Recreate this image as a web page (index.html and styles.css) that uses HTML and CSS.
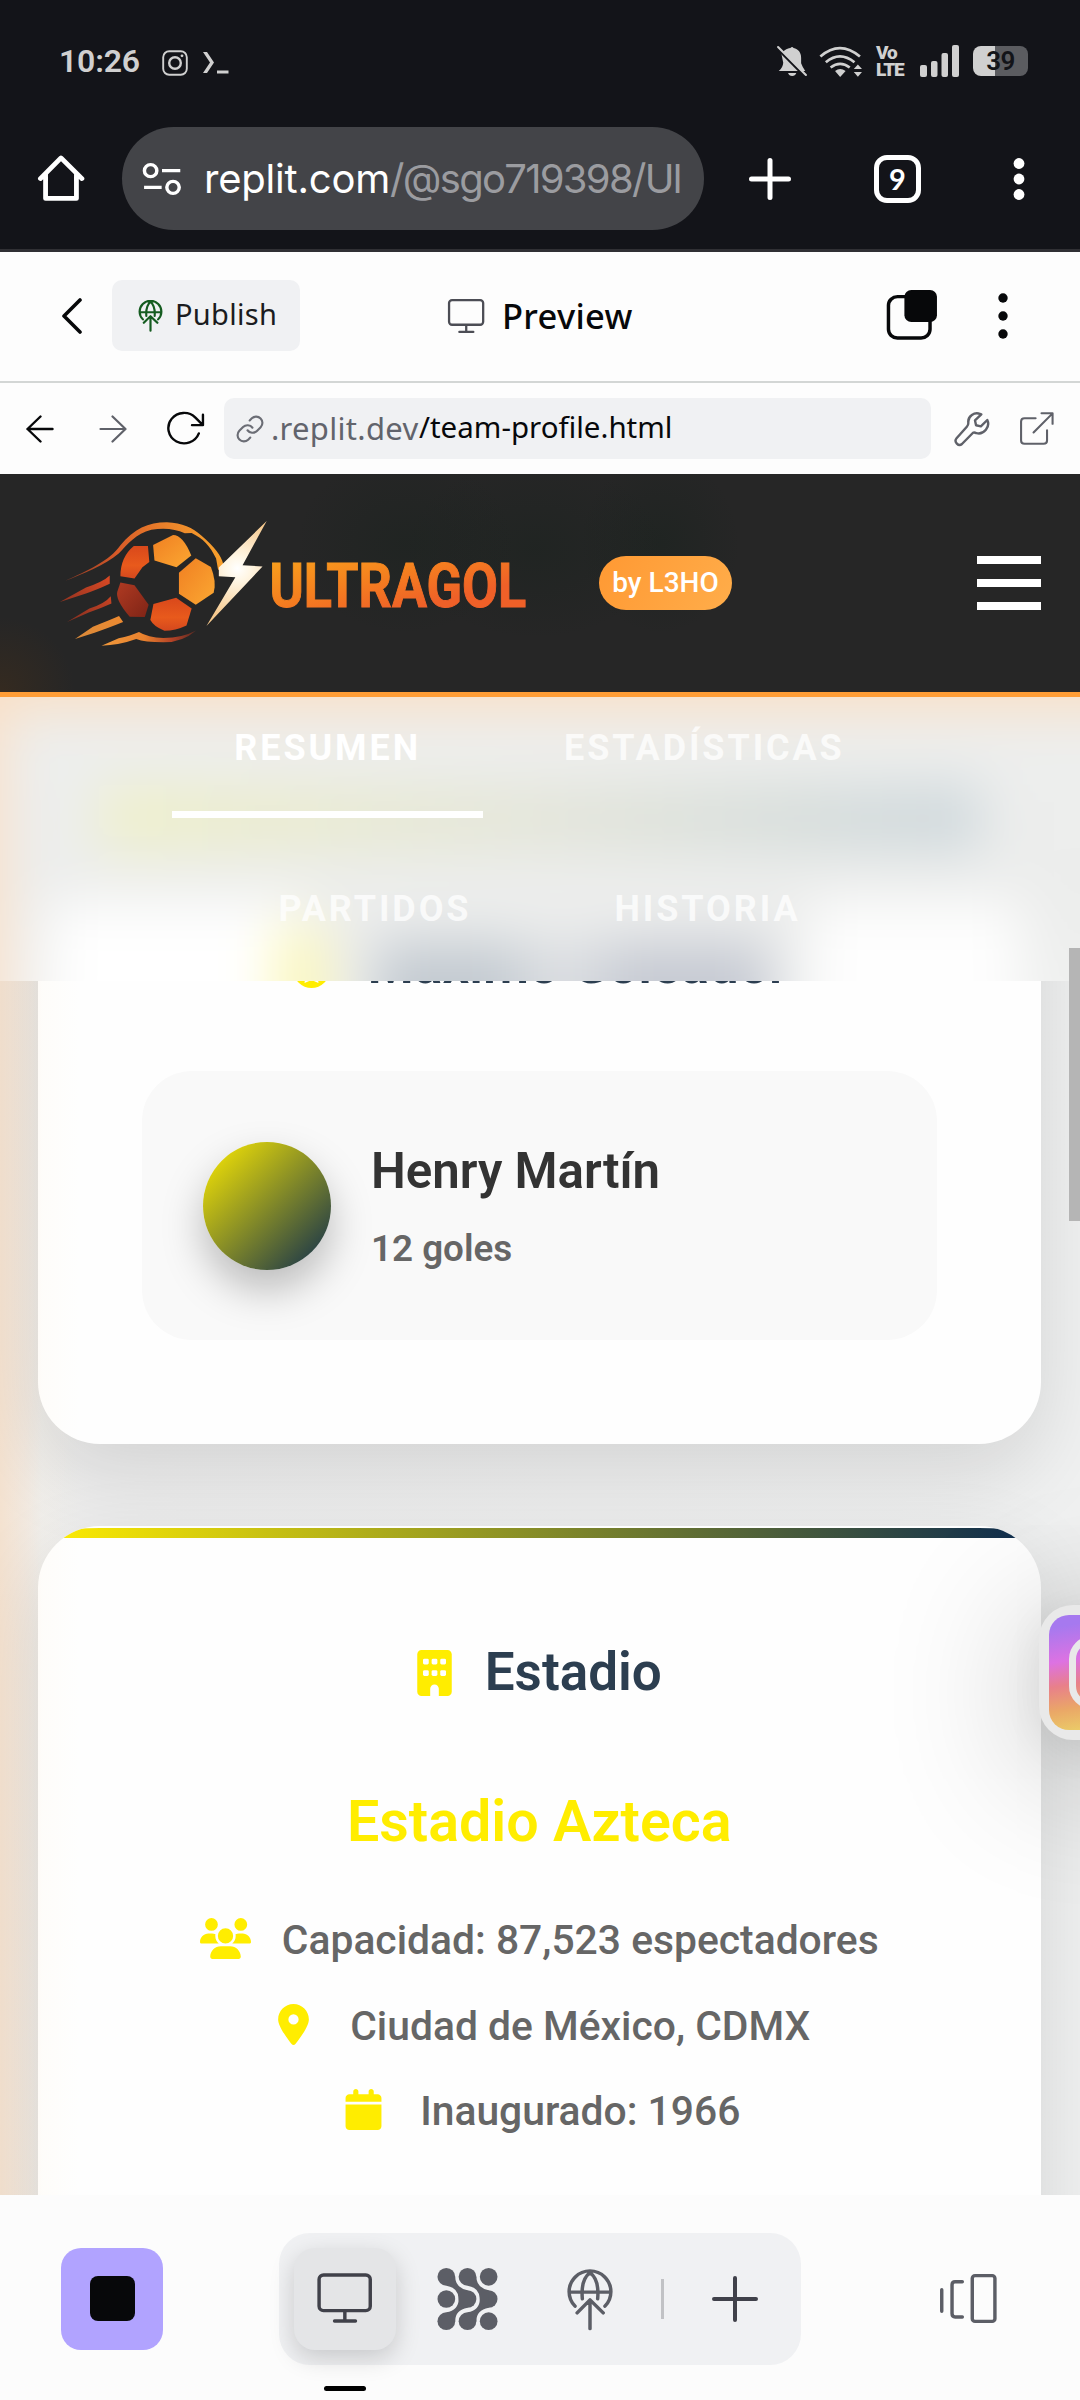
FILE: index.html
```html
<!DOCTYPE html>
<html lang="es">
<head>
<meta charset="utf-8">
<title>Preview</title>
<link rel="stylesheet" href="styles.css">
</head>
<body>
<div class="screen">

<div class="status">
  <span class="clock">10:26</span>
  <svg class="st-insta" viewBox="0 0 26 26" fill="none" stroke="#d0d0d0"><rect x="1.2" y="1.2" width="23.6" height="23.6" rx="6" stroke-width="1.9"/><circle cx="13" cy="13" r="5.8" stroke-width="2.4"/><circle cx="20" cy="5.8" r="1.4" fill="#d0d0d0" stroke="none"/></svg>
  <svg class="st-prompt" viewBox="0 0 26 22"><path d="M0 0h4l7 10.500-7 10.500H0l7-10.500z M14 18.500h11.500v3H14z" fill="#d0d0d0"/></svg>
  <span class="grow"></span>
  <svg class="st-bell" viewBox="684 135 93 96" preserveAspectRatio="none" fill="#d0d0d0"><path d="M700 163c6-12 14-17 26-19q5-6 9 0c14 3 22 14 22 29v17q4 12 12 23H692q12-10 13-25zM719 219h24q-3 9-12 9t-12-9z"/><path d="M686 143L768 229" stroke="#131419" stroke-width="8"/><path d="M690 141L771 225" stroke="#d0d0d0" stroke-width="6" stroke-linecap="round"/></svg>
  <svg class="st-wifi" viewBox="806 135 132 98" preserveAspectRatio="none" fill="none" stroke="#d0d0d0" stroke-width="8"><path d="M813 169q57-50 116 0M829 186q41-35 84 0M843 202q28-22 56 0"/><path d="M856 212q15-11 31 0l-16 18zM911 206l12-13 12 13zM911 215l12 14 12-14z" fill="#d0d0d0" stroke="none"/></svg>
  <span class="volte"><b>Vo</b><b>LTE</b></span>
  <svg class="st-signal" viewBox="0 0 39 32" fill="#d0d0d0"><rect y="20" width="7" height="12" rx="2"/><rect x="11" y="16" width="6.500" height="16" rx="2"/><rect x="21.500" y="8" width="6.500" height="24" rx="2"/><rect x="32" width="7" height="32" rx="2"/></svg>
  <span class="battery">39</span>
</div>

<div class="browser">
  <svg class="b-home" viewBox="108 462 140 146" preserveAspectRatio="none" fill="none" stroke="#fff" stroke-width="14" stroke-linecap="round" stroke-linejoin="round"><path d="M118 537L178 474L239 537M133 524V597H223V524"/></svg>
  <div class="omnibox">
    <svg class="b-tune" viewBox="414 484 116 102" preserveAspectRatio="none" fill="none" stroke="#fff" stroke-width="10"><circle cx="439" cy="510" r="18"/><path d="M472 510h53M420 560h51"/><circle cx="504" cy="560" r="18"/></svg>
    <span class="url">replit.com<i>/@sgo719398/Ul</i></span>
  </div>
  <svg class="b-plus" viewBox="0 0 42 42" stroke="#fff" stroke-width="5" stroke-linecap="round"><path d="M21 2.500v37M2.500 21h37"/></svg>
  <span class="tabs-count">9</span>
  <svg class="b-dots" viewBox="0 0 12 42" fill="#fff"><circle cx="6" cy="5.500" r="5.400"/><circle cx="6" cy="21" r="5.400"/><circle cx="6" cy="36.500" r="5.400"/></svg>
</div>

<div class="tool">
  <svg class="t-back" viewBox="0 0 20 36" fill="none" stroke="#07080a" stroke-width="3.600" stroke-linecap="round" stroke-linejoin="round"><path d="M18 2L2 18L18 34"/></svg>
  <div class="publish">
    <svg class="t-pub" viewBox="75 260 138 188" preserveAspectRatio="none" fill="none" stroke="#155c20" stroke-width="12" stroke-linecap="round" stroke-linejoin="round"><path d="M102 374A60 64 0 1 1 186 374M84 332H204M121 354Q117 295 144 270Q171 295 167 354M144 441V355M107 394L144 355L182 394"/></svg>
    <span>Publish</span>
  </div>
  <svg class="t-mon" viewBox="917 278 166 156" preserveAspectRatio="none" fill="none" stroke="#4c4d55" stroke-width="10" stroke-linecap="round"><rect x="926" y="287" width="149" height="107" rx="13"/><path d="M1001 396v28M971 425h61"/></svg>
  <b class="title">Preview</b>
  <svg class="t-tabs" viewBox="1005 147 153 156" preserveAspectRatio="none"><rect x="1015" y="170" width="120" height="124" rx="26" fill="none" stroke="#07080a" stroke-width="10"/><rect x="1061" y="150" width="94" height="96" rx="20" fill="#07080a"/></svg>
  <svg class="t-dots" viewBox="0 0 10 48" fill="#07080a"><circle cx="5" cy="6" r="4.700"/><circle cx="5" cy="24" r="4.700"/><circle cx="5" cy="42" r="4.700"/></svg>
</div>

<div class="addr">
  <svg class="a-back" viewBox="0 0 28 28" fill="none" stroke="#07080a" stroke-width="2.400" stroke-linecap="round" stroke-linejoin="round"><path d="M14.500 1.500L1.500 14L14.500 26.500M1.500 14H26.500"/></svg>
  <svg class="a-fwd" viewBox="0 0 28 28" fill="none" stroke="#5f6169" stroke-width="2.200" stroke-linecap="round" stroke-linejoin="round"><path d="M13.500 1.500L26.500 14L13.500 26.500M26.500 14H1.500"/></svg>
  <svg class="a-reload" viewBox="480 512 114 106" preserveAspectRatio="none" fill="none" stroke="#07080a" stroke-width="7" stroke-linecap="round" stroke-linejoin="round"><path d="M576 580A46 46 0 1 1 566 532L587 554M588 523V555H556"/></svg>
  <div class="field">
    <svg class="a-link" viewBox="0 0 24 24" fill="none" stroke="#6b6d75" stroke-width="1.700" stroke-linecap="round" stroke-linejoin="round"><path d="M10 13a5 5 0 0 0 7.540.540l3-3a5 5 0 0 0-7.070-7.070l-1.720 1.710"/><path d="M14 11a5 5 0 0 0-7.540-.540l-3 3a5 5 0 0 0 7.070 7.070l1.710-1.710"/></svg>
    <span class="host">.replit.dev</span><span class="path">/team-profile.html</span>
  </div>
  <svg class="a-wrench" viewBox="0 0 24 24" fill="none" stroke="#5f6169" stroke-width="1.600" stroke-linejoin="round"><path d="M17.500 2C13.500.300 9.300 3.600 9.500 7.300C9.700 9 9.400 9.700 8.700 10.300L1.700 18.200C-.300 20.500 3 24 5.300 22L12.700 14.500Q13.500 14 15 14.800C20 16 24.300 10.500 22.200 6L17.900 10.200L14.700 9.500L14 6.300L18.200 2.200Z"/></svg>
  <svg class="a-ext" viewBox="1393 512 104 106" preserveAspectRatio="none" fill="none" stroke="#5f6169" stroke-width="6" stroke-linecap="round" stroke-linejoin="round"><path d="M1441 534H1409Q1399 534 1399 544V601Q1399 611 1409 611H1464Q1474 611 1474 601V570M1435 577L1490 519M1458 519H1490V551"/></svg>
</div>

<header class="site">
  <svg class="logo" viewBox="160 140 1380 400" preserveAspectRatio="none">
    <defs>
      <linearGradient id="arc" x1="190" y1="330" x2="650" y2="200" gradientUnits="userSpaceOnUse"><stop offset="0" stop-color="#8f3a24"/><stop offset=".35" stop-color="#d85a28"/><stop offset="1" stop-color="#fba62c"/></linearGradient>
      <linearGradient id="red" x1="0" y1="1" x2="1" y2="0"><stop offset="0" stop-color="#7c2c20"/><stop offset="1" stop-color="#dd4a24"/></linearGradient>
      <linearGradient id="amber" x1="0" y1="1" x2="1" y2="0"><stop offset="0" stop-color="#d98a3a"/><stop offset="1" stop-color="#ee8a30"/></linearGradient>
      <linearGradient id="low" x1="0" x2="1"><stop offset="0" stop-color="#f0993c"/><stop offset=".45" stop-color="#e8812e"/><stop offset=".75" stop-color="#b34126"/><stop offset="1" stop-color="#5a2a22"/></linearGradient>
      <linearGradient id="gold" x1="0" y1="0" x2="1" y2="1"><stop offset="0" stop-color="#f07f22"/><stop offset="1" stop-color="#fba832"/></linearGradient>
      <linearGradient id="ora" x1="0" y1="0" x2="0" y2="1"><stop offset="0" stop-color="#d9481b"/><stop offset=".6" stop-color="#e85a1c"/><stop offset="1" stop-color="#d4481e"/></linearGradient>
      <linearGradient id="dark" x1="0" y1="0" x2="1" y2="1"><stop offset="0" stop-color="#b03a22"/><stop offset="1" stop-color="#7e2416"/></linearGradient>
      <radialGradient id="bolt" cx="690" cy="295" r="150" gradientUnits="userSpaceOnUse"><stop offset="0" stop-color="#fff"/><stop offset=".25" stop-color="#fff6e4"/><stop offset="1" stop-color="#f6c98e"/></radialGradient>
      <linearGradient id="word" x1="780" y1="250" x2="850" y2="530" gradientUnits="userSpaceOnUse"><stop offset="0" stop-color="#f9a51c"/><stop offset=".5" stop-color="#f5801f"/><stop offset=".9" stop-color="#ef6028"/></linearGradient>
    </defs>
    <path fill="url(#arc)" d="M190 332C250 303 320 272 350 225C390 176 430 156 485 156C530 158 560 172 585 196C625 232 642 255 649 282L634 300L628 265C610 225 590 205 557 188L537 189C510 176 480 172 440 178C395 190 370 222 345 250C305 285 240 312 190 332Z"/>
    <path fill="url(#red)" d="M174 396L250 352Q300 335 319 316V341Q280 360 250 370ZM195 456L260 415Q305 400 322 378L324 400Q290 416 258 427Z"/>
    <path fill="url(#amber)" d="M218 507L270 470Q320 450 346 438L358 456Q310 476 275 488Z"/>
    <path fill="url(#low)" d="M295 527L345 505Q380 497 404 486Q430 503 475 504Q530 503 570 481Q530 517 475 517Q420 517 396 507Q345 526 295 527Z"/>
    <path fill="url(#ora)" d="M389 227L430 227L434 275L414 291L391 325L350 318Q350 260 389 227Z"/>
    <path fill="url(#gold)" d="M445 224L503 194Q532 194 556 256L513 291L449 271Z"/>
    <path fill="url(#gold)" d="M569 264L613 290Q630 335 621 368L569 404L520 371V308Z"/>
    <path fill="url(#dark)" d="M350 337L391 345L432 404L421 441L377 440Q335 390 341 365Z"/>
    <path fill="url(#ora)" d="M446 402L512 383L557 415L542 466Q510 482 478 482Q447 470 437 450Z"/>
    <path fill="url(#bolt)" d="M775 152L705 285L763 289L600 468L684 321L636 318V292Z"/>
    <text class="word" x="783" y="412" textLength="746" lengthAdjust="spacingAndGlyphs" fill="url(#word)" stroke="url(#word)" stroke-width="3">ULTRAGOL</text>
  </svg>
  <span class="badge">by L3HO</span>
  <div class="burger"><i></i><i></i><i></i></div>
</header>

<nav class="tabs">
  <div class="tabrow"><a class="tab on">RESUMEN</a><a class="tab">ESTADÍSTICAS</a></div>
  <div class="tabrow second"><a class="tab">PARTIDOS</a><a class="tab">HISTORIA</a></div>
</nav>

<main class="feed">
  <section class="card scorer">
    <h2><svg class="medal" viewBox="0 0 37 48"><circle cx="18.500" cy="29" r="18" fill="#ffed00"/><path d="M18.500 22l4 7 7 1-5 5 1 7-7-3-7 3 1-7-5-5 7-1z" fill="#fff"/></svg>Máximo Goleador</h2>
    <div class="player">
      <div class="avatar"></div>
      <div><div class="pname">Henry Martín</div><div class="goals">12 goles</div></div>
    </div>
  </section>
  <section class="card stadium">
    <div class="stripe"></div>
    <h2><svg class="building" viewBox="0 0 384 512"><path fill="#ffed00" d="M48 0C21.500 0 0 21.500 0 48V464c0 26.500 21.500 48 48 48h96V432c0-26.500 21.500-48 48-48s48 21.500 48 48v80h96c26.500 0 48-21.500 48-48V48c0-26.500-21.500-48-48-48H48z"/><g fill="#fff"><rect x="64" y="96" width="64" height="64" rx="16"/><rect x="160" y="96" width="64" height="64" rx="16"/><rect x="256" y="96" width="64" height="64" rx="16"/><rect x="64" y="224" width="64" height="64" rx="16"/><rect x="160" y="224" width="64" height="64" rx="16"/><rect x="256" y="224" width="64" height="64" rx="16"/></g></svg>Estadio</h2>
    <h3>Estadio Azteca</h3>
    <p><svg viewBox="0 0 640 512" fill="#ffed00"><path d="M144 0a80 80 0 1 1 0 160A80 80 0 1 1 144 0zM512 0a80 80 0 1 1 0 160A80 80 0 1 1 512 0zM0 298.700C0 239.800 47.800 192 106.700 192h42.700c15.900 0 31 3.500 44.600 9.700c-1.300 7.200-1.900 14.700-1.900 22.300c0 38.200 16.800 72.500 43.300 96H21.300C9.600 320 0 310.400 0 298.700zM404.600 320c26.600-23.500 43.300-57.800 43.300-96c0-7.600-.7-15-1.900-22.300c13.600-6.300 28.700-9.700 44.600-9.700h42.700C592.200 192 640 239.800 640 298.700c0 11.800-9.600 21.300-21.300 21.300H404.600zM224 224a96 96 0 1 1 192 0 96 96 0 1 1-192 0zM128 485.300C128 411.700 187.700 352 261.300 352H378.700C452.300 352 512 411.700 512 485.300c0 14.700-11.900 26.700-26.700 26.700H154.700c-14.700 0-26.700-11.900-26.700-26.700z"/></svg><span>Capacidad: 87,523 espectadores</span></p>
    <p><svg viewBox="0 0 384 512" fill="#ffed00"><path d="M215.700 499.200C267 435 384 279.400 384 192C384 86 298 0 192 0S0 86 0 192c0 87.400 117 243 168.300 307.200c12.300 15.300 35.100 15.300 47.400 0zM192 128a64 64 0 1 1 0 128 64 64 0 1 1 0-128z"/></svg><span>Ciudad de México, CDMX</span></p>
    <p><svg viewBox="0 0 448 512" fill="#ffed00"><path d="M96 32V64H48C21.500 64 0 85.500 0 112v48H448V112c0-26.500-21.500-48-48-48H352V32c0-17.700-14.300-32-32-32s-32 14.300-32 32V64H160V32c0-17.700-14.300-32-32-32S96 14.300 96 32zM448 192H0V464c0 26.500 21.500 48 48 48H400c26.500 0 48-21.500 48-48V192z"/></svg><span>Inaugurado: 1966</span></p>
  </section>
  <div class="glow"></div>
  <div class="insta"><div class="insta-pic"><i></i></div></div>
</main>
<div class="thumb"></div>

<footer class="dock">
  <div class="stop"><i></i></div>
  <div class="group">
    <div class="active"><svg viewBox="917 278 166 156" preserveAspectRatio="none" fill="none" stroke="#40414a" stroke-width="10" stroke-linecap="round"><rect x="926" y="287" width="149" height="107" rx="13"/><path d="M1001 396v28M971 425h61"/></svg></div>
    <svg class="d-grid" viewBox="0 0 61 63" fill="#5c5e66"><circle cx="9" cy="9" r="9"/><circle cx="30.500" cy="9" r="9"/><circle cx="52" cy="9" r="9"/><circle cx="9" cy="31.500" r="9"/><circle cx="30.500" cy="31.500" r="9"/><circle cx="52" cy="31.500" r="9"/><circle cx="9" cy="54" r="9"/><circle cx="30.500" cy="54" r="9"/><circle cx="52" cy="54" r="9"/><path d="M18 9Q18 20 30.500 22.500V40.500Q18 43 18 54L9 45Q21.500 43 21.500 31.500T9 18ZM39.500 9Q39.500 20 52 22.500V40.500Q39.500 43 39.500 54L30.500 45Q43 43 43 31.500T30.500 18Z"/></svg>
    <svg class="d-pub" viewBox="75 260 138 188" preserveAspectRatio="none" fill="none" stroke="#5c5e66" stroke-width="10" stroke-linecap="round" stroke-linejoin="round"><path d="M101 374A60 62 0 1 1 187 374M84 332H204M122 352Q117 295 144 274Q171 295 166 352M144 441V355M107 394L144 355L182 394"/></svg>
    <i class="divider"></i>
    <svg class="d-plus" viewBox="0 0 46 46" stroke="#40414a" stroke-width="4" stroke-linecap="round"><path d="M23 2v42M2 23h42"/></svg>
  </div>
  <svg class="d-side" viewBox="1156 280 172 152" preserveAspectRatio="none" fill="none" stroke="#5c5e66" stroke-width="10" stroke-linecap="round"><path d="M1164 330V394M1224 306H1203Q1194 306 1194 315V401Q1194 411 1203 411H1224"/><rect x="1253" y="288" width="66" height="136" rx="8"/></svg>
  <i class="home-ind"></i>
</footer>
</div>
</body>
</html>
```

FILE: styles.css
```css
* { box-sizing: border-box; }
body { margin: 0; font-family: Roboto, "Liberation Sans", sans-serif; }
svg { display: block; flex: none; }
.screen { position: relative; width: 1080px; height: 2400px; overflow: hidden; background: #fdfdfd; display: flex; flex-direction: column; }
.screen > * { flex: none; }
.grow { flex: 1; }

.status { height: 122px; background: #131419; display: flex; align-items: center; padding-left: 59px; padding-right: 52px; color: #d0d0d0; }
.clock { font-size: 32px; font-weight: 600; width: 103px; line-height: 40px; letter-spacing: -.2px; }
.st-insta { width: 26px; height: 26px; margin-top: 3px; }
.st-prompt { width: 26px; height: 22px; margin: 3px 0 0 15px; }
.st-bell { width: 32px; height: 32px; }
.st-wifi { width: 45px; height: 33px; margin-left: 10px; }
.volte { width: 30px; margin-left: 13px; display: flex; flex-direction: column; font: 700 19px/17px Roboto, sans-serif; letter-spacing: -1.2px; }
.volte b { height: 17px; }
.st-signal { width: 39px; height: 32px; margin-left: 14px; }
.battery { width: 55px; height: 30px; margin-left: 14px; border-radius: 8px; background: linear-gradient(90deg, #d0d0d0 22px, #5b5c60 22px); color: #131419; font-size: 26px; line-height: 31px; font-weight: 600; text-align: center; letter-spacing: -.7px; }

.browser { height: 130px; background: #131419; border-bottom: 3px solid #303034; display: flex; align-items: flex-start; }
.b-home { width: 48px; height: 48px; margin: 32px 0 0 37px; }
.omnibox { width: 582px; height: 103px; border-radius: 52px; margin: 5px 0 0 37px; background: #434448; display: flex; align-items: center; padding-left: 20px; }
.b-tune { width: 40px; height: 34px; }
.url { margin-left: 22px; width: 480px; overflow: hidden; white-space: nowrap; color: #fff; font: 400 40px/60px Inter, sans-serif; letter-spacing: -.2px; }
.url i { font-style: normal; color: #9b9ca0; letter-spacing: -1.7px; }
.b-plus { width: 42px; height: 42px; margin: 36px 0 0 45px; }
.tabs-count { width: 47px; height: 48px; border: 5px solid #fff; border-radius: 13px; margin: 33px 0 0 83px; color: #fff; font: 700 29px/38px Lato, sans-serif; text-align: center; }
.b-dots { width: 12px; height: 42px; margin: 36px 0 0 92px; }

.tool { height: 131px; border-bottom: 2px solid #d3d6d5; display: flex; align-items: flex-start; color: #07080a; font-family: "Noto Sans", sans-serif; }
.t-back { width: 20px; height: 36px; margin: 46px 0 0 62px; }
.publish { width: 188px; height: 71px; margin: 28px 0 0 30px; border-radius: 10px; background: #f0f1f3; display: flex; align-items: center; padding-left: 26px; font-size: 29px; line-height: 40px; color: #1b1c20; letter-spacing: .3px; }
.publish span { margin-left: 12px; margin-bottom: 4px; }
.t-pub { width: 25px; height: 32px; }
.t-mon { width: 38px; height: 36px; margin: 46px 0 0 147px; }
.title { font-size: 34.500px; line-height: 48px; font-weight: 500; margin: 40px 0 0 17px; letter-spacing: .3px; width: 132px; }
.t-tabs { width: 53px; height: 52px; margin: 37px 0 0 251px; }
.t-dots { width: 10px; height: 48px; margin: 40px 0 0 60px; }

.addr { height: 91px; display: flex; align-items: center; font-family: "Noto Sans", sans-serif; padding-left: 26px; }
.a-back, .a-fwd { width: 28px; height: 28px; }
.a-fwd { margin-left: 45px; }
.a-reload { width: 39px; height: 35px; margin-left: 39px; }
.field { width: 707px; height: 61px; margin-left: 19px; border-radius: 10px; background: #f0f1f3; display: flex; align-items: center; padding-left: 11px; line-height: 44px; }
.a-link { width: 30px; height: 30px; }
.host { margin-left: 6px; color: #62646c; width: 148px; font-size: 31px; letter-spacing: .3px; margin-bottom: 1px; }
.path { color: #07080a; font-size: 29.500px; margin-bottom: 3px; }
.a-wrench { width: 36px; height: 36px; margin-left: 23px; }
.a-ext { width: 36px; height: 35px; margin-left: 29px; }

.site { height: 223px; border-bottom: 5px solid #ff9d36; display: flex; align-items: flex-start; background:
  radial-gradient(circle at 0 218px, rgba(80,50,20,.35), transparent 75px),
  radial-gradient(ellipse 110px 90px at 405px 70px, rgba(24,34,29,.4), transparent),
  radial-gradient(ellipse 130px 90px at 535px 75px, rgba(24,34,29,.4), transparent),
  radial-gradient(ellipse 80px 90px at 660px 70px, rgba(24,34,29,.45), transparent), #262626; }
.logo { width: 475px; height: 133px; margin: 43px 0 0 55px; }
.word { font: 700 186px Roboto, sans-serif; }
.badge { width: 133px; height: 54px; margin: 82px 0 0 69px; border-radius: 27px; background: linear-gradient(120deg, #ff9933, #ffad4a); color: #fff; font-size: 28px; line-height: 54px; font-weight: 500; text-align: center; }
.burger { width: 64px; height: 54px; margin: 82px 0 0 245px; display: flex; flex-direction: column; justify-content: space-between; }
.burger i { height: 8px; background: #fff; }

/* Frosted tab bar: the blurred shapes of the content scrolled beneath it */
.tabs { position: relative; overflow: hidden; height: 284px; display: flex; flex-direction: column; background: #eeefed; }
.tabs::before { content: ""; position: absolute; left: -80px; top: -80px; width: 1240px; height: 460px; filter: blur(27px); background:
  linear-gradient(#f9dfc5, #f9dfc5) 0 0 / 1240px 92px no-repeat,
  linear-gradient(#fae0c8, #fae0c8) 0 0 / 84px 460px no-repeat,
  linear-gradient(#fbf7b4, #fbf7b4) 357px 310px / 48px 150px no-repeat,
  linear-gradient(#c3cad1, #c3cad1) 455px 325px / 145px 135px no-repeat,
  linear-gradient(#d9dce0, #d9dce0) 600px 325px / 85px 135px no-repeat,
  linear-gradient(#c6cad3, #c6cad3) 685px 325px / 165px 135px no-repeat,
  linear-gradient(90deg, rgba(240,241,190,.75), rgba(222,224,205,.6) 50%, rgba(195,208,215,.75)) 180px 168px / 880px 66px no-repeat,
  linear-gradient(#fff, #fff) 130px 285px / 260px 175px no-repeat,
  linear-gradient(#fefefe, #fefefe) 890px 285px / 210px 175px no-repeat,
  linear-gradient(#eeefee, #ecedec 60%, #f2f3f2); }
.tabrow { position: relative; height: 121px; display: flex; justify-content: center; padding-right: 1px; gap: 19px; }
.second { margin-top: 40px; }
.tab { height: 121px; padding: 29px 62px 0; color: rgba(255,255,255,.75); font-size: 36px; line-height: 44px; font-weight: 700; letter-spacing: 2.900px; }
.on { color: #fff; border-bottom: 7px solid #fff; }

.feed { position: relative; height: 1214px; overflow: hidden; background: linear-gradient(90deg, #f1f0ee, #efefef 100px, #f0f1f1); padding: 0 39.500px 0 38px; }
.card { background: #fefefe; border-radius: 62px; position: relative; box-shadow: 0 30px 85px rgba(0,0,0,.12); text-align: center; }
h2, h3, p { margin: 0; }
h2 { display: flex; justify-content: center; align-items: center; font-size: 53px; line-height: 62px; font-weight: 600; color: #2c3e50; }
.scorer { margin-top: -200px; height: 663px; padding-top: 153px; }
.scorer h2 { padding-left: 2px; }
.medal { width: 37px; height: 48px; margin-right: 38px; }
.player { margin: 75px auto 0 104px; width: 795px; height: 269px; border-radius: 50px; background: #f9f9f9; display: flex; text-align: left; }
.avatar { width: 128px; height: 128px; border-radius: 50%; margin: 71px 40px 0 61px; background: linear-gradient(135deg, #ffed00, #0b2a4f); box-shadow: 0 20px 42px rgba(0,0,0,.25); }
.pname { font-size: 49.200px; line-height: 60px; font-weight: 600; color: #333; margin-top: 70px; }
.goals { font-size: 36.800px; line-height: 44px; font-weight: 600; color: #666; margin-top: 26px; }
.stadium { margin-top: 82px; height: 1000px; padding-top: 2px; overflow: hidden; }
.stripe { height: 10px; margin: 0 2px; background: linear-gradient(90deg, #ffed00, #0b2a4f); border-radius: 60px 60px 0 0 / 10px 10px 0 0; }
.stadium h2 { margin-top: 103px; }
.building { width: 35px; height: 46px; margin-right: 33px; margin-top: 2px; }
h3 { font-size: 57.400px; line-height: 66px; font-weight: 600; color: #ffed00; margin-top: 86px; }
.stadium p { display: flex; justify-content: center; align-items: center; height: 60px; margin-bottom: 25.500px; font-size: 40.800px; line-height: 48px; font-weight: 500; color: #666; }
.stadium h3 + p { margin-top: 55px; }
.stadium p svg { width: 51px; height: 41px; margin-right: 31px; margin-top: -3px; }
.glow { position: absolute; left: 0; top: 0; width: 80px; height: 1214px; background: linear-gradient(90deg, rgba(255,175,100,.22), rgba(255,185,120,.13) 25px, rgba(255,225,170,.05) 42px, transparent); }
.insta { position: absolute; left: 1039px; top: 624px; width: 135px; height: 135px; border-radius: 34px; background: #e9e9e9; box-shadow: 0 20px 150px rgba(0,0,0,.3), 0 10px 40px rgba(0,0,0,.06); padding: 10px; }
.insta-pic { width: 115px; height: 115px; border-radius: 20px; background: linear-gradient(170deg, #a679ef 10%, #dd72e2 36%, #e8808a 54%, #eaa767 72%, #ebd768 95%); padding: 21px 20px; }
.insta-pic i { display: block; width: 73px; height: 73px; border: 7px solid #e9e9e9; border-radius: 23px; }
.thumb { position: absolute; left: 1069px; top: 948px; width: 11px; height: 273px; background: #b5b5b5; }

.dock { position: relative; height: 205px; background: #fcfcfc; display: flex; align-items: flex-start; padding-left: 61px; }
.stop { width: 102px; height: 102px; margin-top: 53px; border-radius: 20px; background: #b1a3ff; padding: 28px 29px; }
.stop i { display: block; width: 45px; height: 45px; border-radius: 8px; background: #07080a; }
.group { width: 522px; height: 132px; margin: 38px 0 0 116px; border-radius: 31px; background: #f0f1f3; display: flex; align-items: center; padding-left: 15px; }
.active { width: 102px; height: 102px; border-radius: 21px; background: #e4e5e7; box-shadow: 0 8px 24px rgba(0,0,0,.17); padding: 24px 22px; }
.active svg { width: 57px; height: 52px; }
.d-grid { width: 61px; height: 62px; margin-left: 41px; }
.d-pub { width: 48px; height: 63px; margin-left: 68px; }
.divider { width: 3px; height: 40px; background: #c1c2c5; margin-left: 47px; }
.d-plus { width: 46px; height: 46px; margin-left: 48px; }
.d-side { width: 59px; height: 51px; margin: 78px 0 0 138px; }
.home-ind { position: absolute; left: 324px; top: 191px; width: 42px; height: 5px; border-radius: 3px; background: #000; }
```
